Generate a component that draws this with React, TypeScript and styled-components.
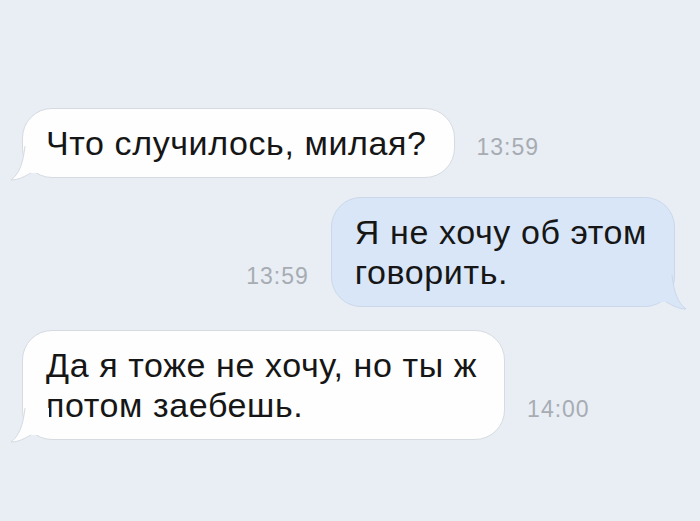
import React from "react";
import styled, { createGlobalStyle } from "styled-components";

const Global = createGlobalStyle`
  html, body { margin: 0; padding: 0; background: #e9eef5; }
  body { font-family: "Liberation Sans", Arial, sans-serif; }
`;

const Page = styled.div`
  width: 700px;
  height: 521px;
  box-sizing: border-box;
  padding: 108px 25px 0 22px;
  display: flex;
  flex-direction: column;
  background: #e9eef5;
  overflow: hidden;
`;

const Row = styled.div<{ $out?: boolean; $gapTop: number }>`
  display: flex;
  flex-direction: ${(p) => (p.$out ? "row-reverse" : "row")};
  align-items: flex-end;
  gap: 22px;
  margin-top: ${(p) => p.$gapTop}px;
`;

const Bubble = styled.div<{ $out?: boolean }>`
  position: relative;
  box-sizing: border-box;
  padding: 14px 27px 14px 23px;
  border-radius: 30px;
  background: ${(p) => (p.$out ? "#d9e6f7" : "#fefefe")};
  border: 1px solid ${(p) => (p.$out ? "#cbd8ea" : "#d6dbe2")};
  color: #161616;
  font-size: 34px;
  letter-spacing: 0.6px;
  line-height: 40px;
  white-space: nowrap;
`;

const Time = styled.div`
  color: #a7acb3;
  font-size: 23px;
  letter-spacing: 1px;
  padding-bottom: 17px;
`;

const TailSvg = styled.svg<{ $out?: boolean }>`
  position: absolute;
  bottom: -3px;
  ${(p) => (p.$out ? "right: -14px;" : "left: -14px;")}
  width: 40px;
  height: 34px;
  overflow: visible;
`;

function Tail({ out }: { out?: boolean }) {
  const fill = out ? "#d9e6f7" : "#fefefe";
  const stroke = out ? "#cbd8ea" : "#d6dbe2";
  const d = out
    ? "M24 0 C 26 18, 30 28, 38 34 C 30 34, 24 30, 18 27 L 0 27 L 0 0 Z"
    : "M16 0 C 14 18, 10 28, 2 34 C 10 34, 16 30, 22 27 L 40 27 L 40 0 Z";
  const line = out
    ? "M24 0 C 26 18, 30 28, 38 34 C 30 34, 24 30, 18 27"
    : "M16 0 C 14 18, 10 28, 2 34 C 10 34, 16 30, 22 27";
  return (
    <TailSvg $out={out} viewBox="0 0 40 34">
      <path d={d} fill={fill} />
      <path d={line} fill="none" stroke={stroke} strokeWidth={1} />
    </TailSvg>
  );
}

export default function App() {
  return (
    <>
      <Global />
      <Page>
        <Row $gapTop={0}>
          <Bubble>
            <Tail />
            Что случилось, милая?
          </Bubble>
          <Time>13:59</Time>
        </Row>
        <Row $out $gapTop={19}>
          <Bubble $out>
            <Tail out />
            Я не хочу об этом
            <br />
            говорить.
          </Bubble>
          <Time>13:59</Time>
        </Row>
        <Row $gapTop={23}>
          <Bubble>
            <Tail />
            Да я тоже не хочу, но ты ж
            <br />
            потом заебешь.
          </Bubble>
          <Time>14:00</Time>
        </Row>
      </Page>
    </>
  );
}
